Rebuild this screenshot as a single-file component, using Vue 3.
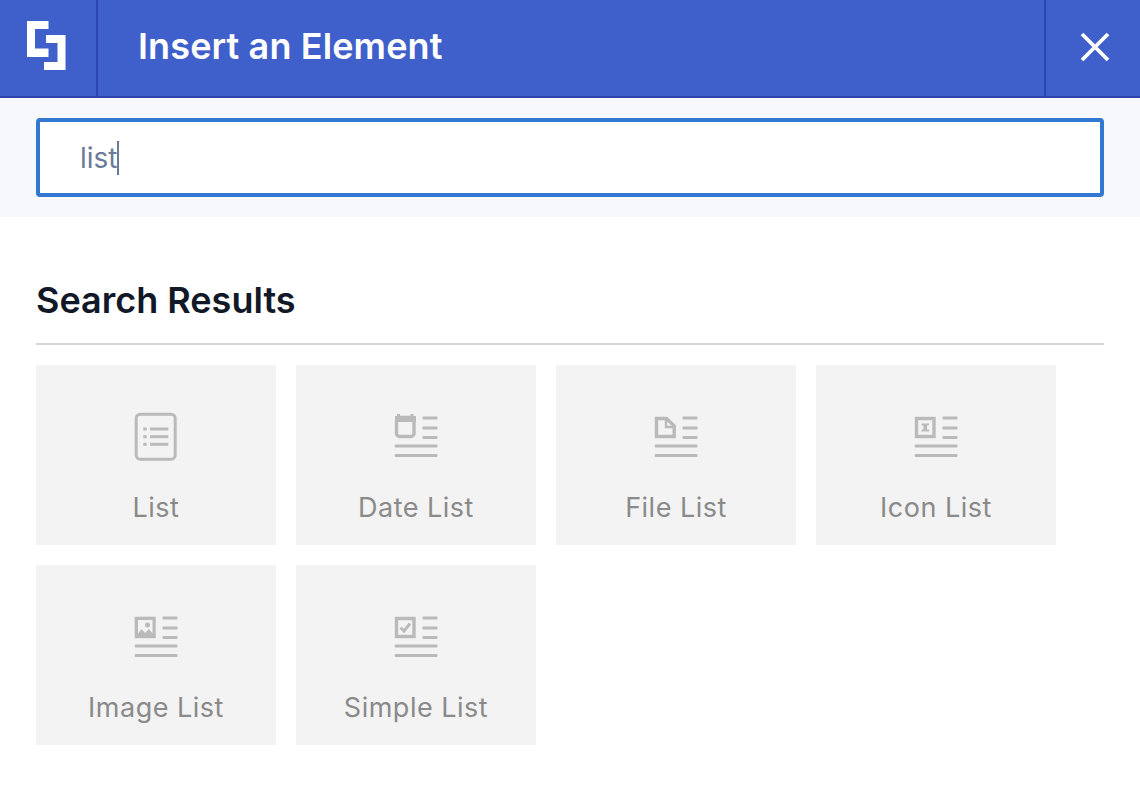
<template>
  <div class="panel">
    <header class="topbar">
      <div class="logo">
        <svg width="40" height="50" viewBox="0 0 40 50">
          <path d="M0 0H21.5V8H8V27.5H21.5V36H0Z" fill="#fff" />
          <path d="M19 14H38.5V49H17V41H30.5V22H19Z" fill="#fff" />
        </svg>
      </div>
      <h1 class="title">Insert an Element</h1>
      <button class="close" aria-label="Close">
        <svg width="30" height="30" viewBox="0 0 30 30">
          <path d="M2 2L28 28M28 2L2 28" stroke="#fff" stroke-width="3.8" fill="none" />
        </svg>
      </button>
    </header>

    <div class="search">
      <div class="field">
        <span class="value">list</span><span class="caret"></span>
      </div>
    </div>

    <section class="results">
      <h2 class="heading">Search Results</h2>
      <div class="grid">
        <div v-for="item in items" :key="item.label" class="tile">
          <svg class="icon" width="48" height="50" viewBox="0 0 48 50">
            <template v-if="item.type === 'list'">
              <rect x="4.2" y="3.2" width="39" height="45" rx="4" fill="none" stroke="#bababa" stroke-width="3" />
              <rect x="11.3" y="16.5" width="3.4" height="3" fill="#bababa" />
              <rect x="11.3" y="24.2" width="3.4" height="3" fill="#bababa" />
              <rect x="11.3" y="31.8" width="3.4" height="3" fill="#bababa" />
              <rect x="18" y="16.5" width="18.3" height="3" fill="#bababa" />
              <rect x="18" y="24.2" width="18.3" height="3" fill="#bababa" />
              <rect x="18" y="31.8" width="18.3" height="3" fill="#bababa" />
            </template>
            <template v-else>
              <rect x="30.5" y="5.5" width="15" height="3" rx="1" fill="#bababa" />
              <rect x="30.5" y="15.5" width="15" height="3" rx="1" fill="#bababa" />
              <rect x="30.5" y="25" width="15" height="3" rx="1" fill="#bababa" />
              <rect x="2.7" y="33.5" width="42.8" height="3" rx="1" fill="#bababa" />
              <rect x="2.7" y="43" width="42.8" height="3" rx="1" fill="#bababa" />

              <template v-if="item.type === 'date'">
                <path d="M6.5 3V7M20 3V7" stroke="#bababa" stroke-width="3" fill="none" />
                <rect x="4.5" y="6.5" width="17.5" height="19" rx="3" fill="none" stroke="#bababa" stroke-width="3.4" />
                <rect x="3" y="5" width="21" height="6" fill="#bababa" />
              </template>
              <template v-if="item.type === 'file'">
                <path d="M4.5 7.5H14.5L22.2 15V25.5H4.5Z" fill="none" stroke="#bababa" stroke-width="3.4" />
                <path d="M14 7V16H23" fill="none" stroke="#bababa" stroke-width="2.4" />
              </template>
              <template v-if="item.type === 'icon'">
                <rect x="4.5" y="7.5" width="17.5" height="18" fill="none" stroke="#bababa" stroke-width="3.4" />
                <path d="M9.5 12.5H17V14.5H15V18.5H17V20.5H9.5V18.5H11.5V14.5H9.5Z" fill="#bababa" />
              </template>
              <template v-if="item.type === 'image'">
                <rect x="2.7" y="5.7" width="21" height="21.5" fill="#bababa" />
                <path d="M6 9H20.5V22.5L17 18L13 22L9.5 18L6 22.5Z" fill="#f3f3f3" />
                <circle cx="15.5" cy="14" r="2.5" fill="#bababa" />
              </template>
              <template v-if="item.type === 'check'">
                <rect x="4.5" y="7.5" width="17.5" height="18" fill="none" stroke="#bababa" stroke-width="3.4" />
                <path d="M8.5 16.5L12 20L18 12.5" fill="none" stroke="#bababa" stroke-width="3" />
              </template>
            </template>
          </svg>
          <span class="label">{{ item.label }}</span>
        </div>
      </div>
    </section>
  </div>
</template>

<script setup>
const items = [
  { label: "List", type: "list" },
  { label: "Date List", type: "date" },
  { label: "File List", type: "file" },
  { label: "Icon List", type: "icon" },
  { label: "Image List", type: "image" },
  { label: "Simple List", type: "check" },
];
</script>

<style>
html,
body {
  background: #fff;
}
</style>

<style scoped>
.panel {
  width: 1140px;
  height: 806px;
  overflow: hidden;
  background: #fff;
  font-family: Inter, "Liberation Sans", sans-serif;
}
.topbar {
  display: flex;
  align-items: stretch;
  height: 98px;
  box-sizing: border-box;
  background: #3f60cb;
  border-bottom: 2px solid #2f45ab;
}
.logo {
  flex: none;
  width: 98px;
  box-sizing: border-box;
  border-right: 2px solid #2f45ab;
  padding: 21px 0 0 27px;
}
.logo svg {
  display: block;
}
.title {
  flex: 1;
  margin: 0;
  padding-left: 40px;
  color: #fff;
  font-size: 36px;
  font-weight: 600;
  letter-spacing: 0.12px;
  line-height: 92px;
}
.close {
  flex: none;
  width: 96px;
  padding: 0 0 2px 4px;
  display: flex;
  align-items: center;
  justify-content: center;
  background: none;
  border: 0;
  border-left: 2px solid #2f45ab;
}
.search {
  height: 119px;
  box-sizing: border-box;
  padding: 20px 36px;
  background: #f6f8fc;
}
.field {
  display: flex;
  align-items: center;
  height: 79px;
  box-sizing: border-box;
  padding-left: 40px;
  background: #fff;
  border: 4px solid #3278d0;
  border-radius: 4px;
}
.value {
  color: #6b7a99;
  font-size: 28px;
}
.caret {
  width: 2px;
  height: 34px;
  margin-left: -1px;
  background: #6b7a99;
}
.results {
  padding: 62px 36px 0;
}
.heading {
  margin: 0;
  padding-bottom: 22px;
  border-bottom: 2px solid #d6d6d6;
  color: #111827;
  font-size: 36px;
  font-weight: 600;
  line-height: 42px;
}
.grid {
  display: flex;
  flex-wrap: wrap;
  gap: 20px;
  margin-top: 20px;
}
.tile {
  display: flex;
  flex-direction: column;
  align-items: center;
  width: 240px;
  height: 180px;
  box-sizing: border-box;
  padding-top: 46px;
  background: #f3f3f3;
}
.icon {
  display: block;
  flex: none;
}
.label {
  margin-top: 30px;
  color: #8a8a8a;
  font-size: 27px;
  letter-spacing: 0.5px;
  line-height: 34px;
}
</style>
